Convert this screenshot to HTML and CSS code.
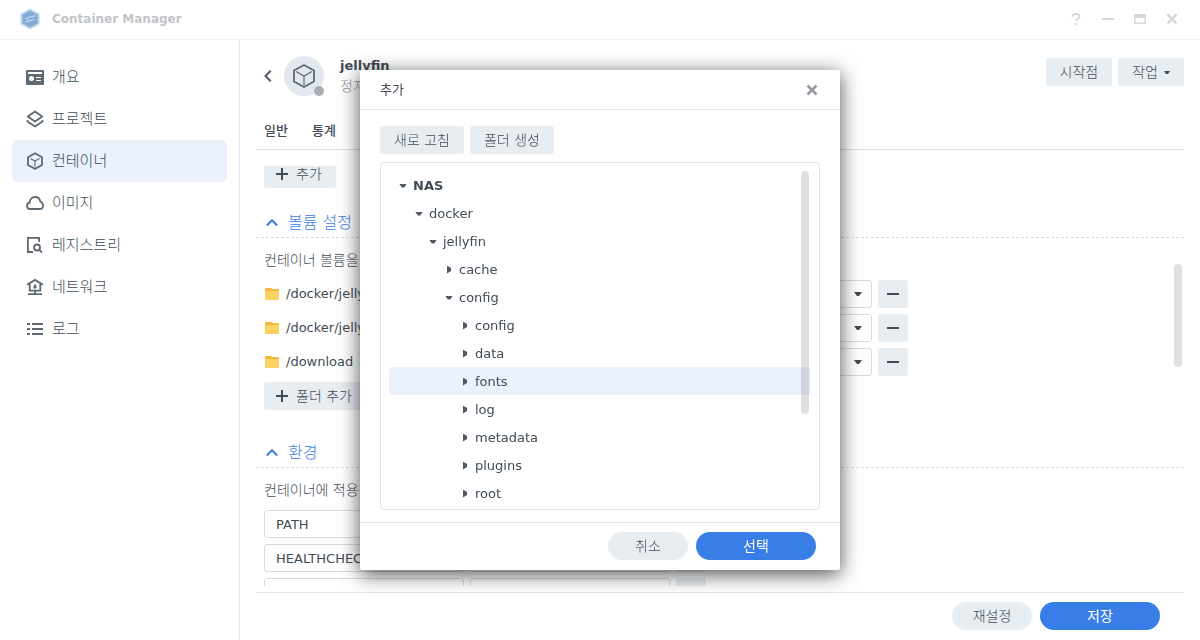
FILE: index.html
```html
<!DOCTYPE html>
<html lang="ko">
<head>
<meta charset="utf-8">
<meta name="viewport" content="width=device-width, initial-scale=1">
<title>Container Manager</title>
<link rel="stylesheet" href="styles.css">
</head>
<body>
<div class="window">
  <header class="titlebar">
    <svg class="app-logo" width="22" height="22" viewBox="0 0 22 22" aria-hidden="true">
      <path d="M11 0.500 20.500 5.700V16.300L11 21.500 1.500 16.300V5.700Z" fill="#b5d8f8"/>
      <path d="M11 2.500 18.700 6.800V15.200L11 19.500 3.300 15.200V6.800Z" fill="#93a7c6"/>
      <path d="M11 4.500 16.800 7.800V14.200L11 17.500 5.200 14.200V7.800Z" fill="#82a8dc"/>
      <path d="M6 10.500c2 1 3-1 5-1.500s3 .5 5-1.500M6.500 13.500c3 .5 4-1.500 9-2" fill="none" stroke="#b9e0ee" stroke-width="1.200"/>
    </svg>
    <h1 class="app-title">Container Manager</h1>
    <div class="window-controls">
      <button class="icon-button" aria-label="도움말"><svg width="12" height="12" viewBox="0 0 12 12"><path d="M2.500 3.800C2.500 2 4 1 6 1s3.500 1 3.500 2.700C9.500 5.800 6.200 5.600 6.200 8.300M5.200 11h2" fill="none" stroke="currentColor" stroke-width="1.800"/></svg></button>
      <button class="icon-button" aria-label="최소화"><svg width="12" height="12" viewBox="0 0 12 12"><path d="M0 6h12" stroke="currentColor" stroke-width="2"/></svg></button>
      <button class="icon-button" aria-label="최대화"><svg width="12" height="12" viewBox="0 0 12 12"><path d="M0 1h12v10H0zM1.500 5v4.500h9V5z" fill="currentColor" fill-rule="evenodd"/></svg></button>
      <button class="icon-button" aria-label="닫기"><svg width="12" height="12" viewBox="0 0 12 12"><path d="M1.500 1.500l9 9M10.500 1.500l-9 9" stroke="currentColor" stroke-width="2.600"/></svg></button>
    </div>
  </header>

  <div class="body">
    <nav class="sidebar" aria-label="메뉴">
      <a class="nav-item" href="#overview"><svg width="18" height="18" viewBox="0 0 18 18"><path fill="currentColor" fill-rule="evenodd" d="M1 2h16a1 1 0 0 1 1 1v13a1 1 0 0 1-1 1H1a1 1 0 0 1-1-1V3a1 1 0 0 1 1-1zM2 4v2h14V4zM5.500 8a2.500 2.500 0 1 0 0 5 2.500 2.500 0 0 0 0-5zM10 9v1h5V9zM10 12v1h5v-1z"/></svg>개요</a>
      <a class="nav-item" href="#project"><svg width="18" height="18" viewBox="0 0 18 18"><g fill="none" stroke="currentColor" stroke-width="1.800" stroke-linejoin="round"><path d="M9 1.500 16.200 6.500 9 11.500 1.800 6.500Z"/><path d="M1.500 10V11.500L9 16.500 16.500 11.500V10"/></g></svg>프로젝트</a>
      <a class="nav-item nav-item-active" href="#container" aria-current="page"><svg width="18" height="18" viewBox="0 0 18 18"><path d="M9 1.200 16 5.200V13L9 16.900 2 13V5.200Z" fill="none" stroke="currentColor" stroke-width="1.800" stroke-linejoin="round"/><path d="M4.500 6.500 9 9 13.500 6.500M9 9v5.500" fill="none" stroke="currentColor" stroke-width="1.100"/></svg>컨테이너</a>
      <a class="nav-item" href="#image"><svg width="18" height="18" viewBox="0 0 18 18"><path d="M4.500 15C2.300 15 1 13.500 1 11.700 1 10 2.200 8.800 3.700 8.500 3.800 5.300 6 3 9 3c2.800 0 4.800 1.800 5.300 4.500C16 8.200 17 9.600 17 11.400 17 13.500 15.500 15 13.400 15Z" fill="none" stroke="currentColor" stroke-width="1.800"/></svg>이미지</a>
      <a class="nav-item" href="#registry"><svg width="18" height="18" viewBox="0 0 18 18"><g fill="none" stroke="currentColor" stroke-width="1.800"><path d="M7 16H1.900V1.900H13.100V6"/><circle cx="11" cy="11.500" r="3"/><path d="M13.200 13.600 16 16.700"/></g></svg>레지스트리</a>
      <a class="nav-item" href="#network"><svg width="18" height="18" viewBox="0 0 18 18"><g fill="none" stroke="currentColor" stroke-width="1.800"><path d="M1 6.800 9 1.900 17 6.800M3.700 6V12.700H14.300V6M9 12.700V16M2 16.200H16"/></g><path d="M7.500 10.500V8L9 6l1.500 2v2.500z" fill="currentColor"/></svg>네트워크</a>
      <a class="nav-item" href="#log"><svg width="18" height="18" viewBox="0 0 18 18"><path d="M1 4h3M6 4h11M1 9h3M6 9h11M1 14h3M6 14h11" stroke="currentColor" stroke-width="2"/></svg>로그</a>
    </nav>

    <main class="main">
      <div class="detail-header">
        <button class="back" aria-label="뒤로"><svg width="8" height="12" viewBox="0 0 8 12"><path d="M6.700 0.800 1.500 6l5.200 5.200" fill="none" stroke="currentColor" stroke-width="2"/></svg></button>
        <div class="avatar">
          <svg width="24" height="26" viewBox="0 0 24 26" aria-hidden="true"><path d="M12 2 22 7.500V18.500L12 24 2 18.500V7.500Z" fill="none" stroke="currentColor" stroke-width="1.800" stroke-linejoin="round"/><path d="M4 8.500 12 13 20 8.500M12 13V22" fill="none" stroke="currentColor" stroke-width="1.200"/></svg>
          <span class="status-dot"></span>
        </div>
        <div class="identity">
          <h2 class="container-name">jellyfin</h2>
          <p class="container-status">정지됨</p>
        </div>
        <div class="detail-actions">
          <button class="button">시작점</button>
          <button class="button">작업<svg width="6" height="3" viewBox="0 0 6 3"><path d="M0 0h6L4 3H2z" fill="currentColor"/></svg></button>
        </div>
      </div>
      <div class="tabs">
        <button class="tab">일반</button>
        <button class="tab">통계</button>
      </div>

      <div class="scroll-area">
        <div class="settings">
          <button class="button add-button"><svg width="12" height="12" viewBox="0 0 12 12"><path d="M0 6h12M6 0v12" stroke="currentColor" stroke-width="2"/></svg>추가</button>

          <section class="section">
            <h3 class="section-title"><svg width="12" height="8" viewBox="0 0 12 8"><path d="M0.800 6.500 6 1.300 11.200 6.500" fill="none" stroke="currentColor" stroke-width="2"/></svg>볼륨 설정</h3>
            <div class="section-body">
              <p class="description">컨테이너 볼륨을</p>
              <div class="row">
                <span class="path"><svg width="14" height="12" viewBox="0 0 14 12"><path d="M0 1q0-1 1-1h5l1.500 1H13q1 0 1 1v4H0z" fill="#f5b83f"/><path d="M0 3h14v8q0 1-1 1H1q-1 0-1-1z" fill="#fad364"/></svg>/docker/jellyfin</span>
                <input class="field" type="text" aria-label="마운트 경로">
                <span class="select-wrap"><select class="field select" aria-label="권한"></select><svg class="select-caret" width="8" height="4" viewBox="0 0 8 4"><path d="M0 0h8L5 4H3z" fill="currentColor"/></svg></span>
                <button class="button remove" aria-label="제거"><svg width="12" height="2" viewBox="0 0 12 2"><path d="M0 1h12" stroke="currentColor" stroke-width="2"/></svg></button>
              </div>
              <div class="row">
                <span class="path"><svg width="14" height="12" viewBox="0 0 14 12"><path d="M0 1q0-1 1-1h5l1.500 1H13q1 0 1 1v4H0z" fill="#f5b83f"/><path d="M0 3h14v8q0 1-1 1H1q-1 0-1-1z" fill="#fad364"/></svg>/docker/jellyfin</span>
                <input class="field" type="text" aria-label="마운트 경로">
                <span class="select-wrap"><select class="field select" aria-label="권한"></select><svg class="select-caret" width="8" height="4" viewBox="0 0 8 4"><path d="M0 0h8L5 4H3z" fill="currentColor"/></svg></span>
                <button class="button remove" aria-label="제거"><svg width="12" height="2" viewBox="0 0 12 2"><path d="M0 1h12" stroke="currentColor" stroke-width="2"/></svg></button>
              </div>
              <div class="row">
                <span class="path"><svg width="14" height="12" viewBox="0 0 14 12"><path d="M0 1q0-1 1-1h5l1.500 1H13q1 0 1 1v4H0z" fill="#f5b83f"/><path d="M0 3h14v8q0 1-1 1H1q-1 0-1-1z" fill="#fad364"/></svg>/download</span>
                <input class="field" type="text" aria-label="마운트 경로">
                <span class="select-wrap"><select class="field select" aria-label="권한"></select><svg class="select-caret" width="8" height="4" viewBox="0 0 8 4"><path d="M0 0h8L5 4H3z" fill="currentColor"/></svg></span>
                <button class="button remove" aria-label="제거"><svg width="12" height="2" viewBox="0 0 12 2"><path d="M0 1h12" stroke="currentColor" stroke-width="2"/></svg></button>
              </div>
              <button class="button add-button"><svg width="12" height="12" viewBox="0 0 12 12"><path d="M0 6h12M6 0v12" stroke="currentColor" stroke-width="2"/></svg>폴더 추가</button>
            </div>
          </section>

          <section class="section">
            <h3 class="section-title"><svg width="12" height="8" viewBox="0 0 12 8"><path d="M0.800 6.500 6 1.300 11.200 6.500" fill="none" stroke="currentColor" stroke-width="2"/></svg>환경</h3>
            <div class="section-body">
              <p class="description">컨테이너에 적용</p>
              <div class="row">
                <input class="field" type="text" value="PATH" aria-label="변수">
                <input class="field" type="text" aria-label="값">
                <button class="button remove" aria-label="제거"></button>
              </div>
              <div class="row">
                <input class="field" type="text" value="HEALTHCHECK" aria-label="변수">
                <input class="field" type="text" aria-label="값">
                <button class="button remove" aria-label="제거"></button>
              </div>
              <div class="row">
                <input class="field" type="text" aria-label="변수">
                <input class="field" type="text" aria-label="값">
                <button class="button remove" aria-label="제거"></button>
              </div>
            </div>
          </section>
        </div>
        <span class="scrollbar page-scrollbar"></span>
      </div>

      <footer class="page-footer">
        <button class="button pill">재설정</button>
        <button class="button pill pill-primary">저장</button>
      </footer>
    </main>
  </div>
</div>

<div class="overlay">
  <div class="dialog" role="dialog" aria-modal="true" aria-labelledby="dialog-title">
    <header class="dialog-header">
      <h2 class="dialog-title" id="dialog-title">추가</h2>
      <button class="icon-button dialog-close" aria-label="닫기"><svg width="12" height="12" viewBox="0 0 12 12"><path d="M1.500 1.500l9 9M10.500 1.500l-9 9" stroke="currentColor" stroke-width="2.600"/></svg></button>
    </header>
    <div class="dialog-body">
      <div class="toolbar">
        <button class="button">새로 고침</button>
        <button class="button">폴더 생성</button>
      </div>
      <div class="tree-box">
        <ul class="tree" role="tree">
          <li class="node node-root level-1" role="treeitem" aria-expanded="true"><span class="caret caret-open"></span>NAS</li>
          <li class="node level-2" role="treeitem" aria-expanded="true"><span class="caret caret-open"></span>docker</li>
          <li class="node level-3" role="treeitem" aria-expanded="true"><span class="caret caret-open"></span>jellyfin</li>
          <li class="node level-4" role="treeitem"><span class="caret"></span>cache</li>
          <li class="node level-4" role="treeitem" aria-expanded="true"><span class="caret caret-open"></span>config</li>
          <li class="node level-5" role="treeitem"><span class="caret"></span>config</li>
          <li class="node level-5" role="treeitem"><span class="caret"></span>data</li>
          <li class="node node-selected level-5" role="treeitem" aria-selected="true"><span class="caret"></span>fonts</li>
          <li class="node level-5" role="treeitem"><span class="caret"></span>log</li>
          <li class="node level-5" role="treeitem"><span class="caret"></span>metadata</li>
          <li class="node level-5" role="treeitem"><span class="caret"></span>plugins</li>
          <li class="node level-5" role="treeitem"><span class="caret"></span>root</li>
        </ul>
        <span class="scrollbar tree-scrollbar"></span>
      </div>
    </div>
    <footer class="dialog-footer">
      <button class="button pill">취소</button>
      <button class="button pill pill-primary">선택</button>
    </footer>
  </div>
</div>
</body>
</html>
```

FILE: styles.css
```css
*,
*::before,
*::after {
  box-sizing: border-box;
}

body {
  margin: 0;
  color: #414b55;
  background: #fff;
  font-family: "DejaVu Sans", "Noto Sans CJK KR", sans-serif;
  font-size: 13px;
  line-height: 20px;
}

h1, h2, h3, p, ul {
  margin: 0;
  padding: 0;
  font-size: inherit;
  font-weight: normal;
}

button, input, select {
  margin: 0;
  color: inherit;
  font: inherit;
}

svg {
  flex: none;
  display: block;
}

.window {
  display: flex;
  flex-direction: column;
  height: 100vh;
}

/* Title bar */
.titlebar {
  display: flex;
  align-items: center;
  height: 40px;
  padding: 0 20px 1px 19px;
  border-bottom: 1px solid #f3f4f6;
}

.app-title {
  flex: 1;
  margin-left: 11px;
  color: #c2c4c8;
  font-size: 12px;
  font-weight: bold;
}

.window-controls {
  display: flex;
  gap: 16px;
  color: #d7d8dc;
}

.icon-button {
  display: flex;
  align-items: center;
  justify-content: center;
  width: 16px;
  height: 16px;
  padding: 0;
  border: 0;
  background: none;
}

/* Sidebar */
.body {
  display: flex;
  flex: 1;
  min-height: 0;
}

.sidebar {
  flex: none;
  width: 240px;
  padding: 16px 12px;
  border-right: 1px solid #e4e8ef;
}

.nav-item {
  display: flex;
  align-items: center;
  gap: 8px;
  height: 42px;
  padding: 0 14px;
  border-radius: 5px;
  color: #414b55;
  font-size: 15px;
  font-weight: 300;
  text-decoration: none;
}

.nav-item svg {
  color: #5f6973;
}

.nav-item-active {
  background: #ebf1fd;
}

/* Container details */
.main {
  display: flex;
  flex: 1;
  flex-direction: column;
  min-width: 0;
  padding: 0 16px;
}

.detail-header {
  display: flex;
  align-items: center;
  height: 72px;
  padding-left: 8px;
}

.back {
  padding: 0;
  border: 0;
  background: none;
  color: #505a64;
}

.avatar {
  position: relative;
  display: grid;
  place-items: center;
  width: 40px;
  height: 40px;
  margin-left: 12px;
  border-radius: 50%;
  background: #e3e8f0;
  color: #5f6973;
}

.status-dot {
  position: absolute;
  right: 0;
  bottom: 0;
  width: 10px;
  height: 10px;
  border-radius: 50%;
  background: #a9acb2;
}

.identity {
  flex: 1;
  margin-left: 16px;
}

.container-name {
  font-weight: bold;
}

.container-status {
  color: #8d949c;
  font-size: 14px;
  font-weight: 300;
}

.detail-actions {
  display: flex;
  align-self: flex-start;
  gap: 6px;
  padding-top: 18px;
}

.button {
  display: inline-flex;
  align-items: center;
  justify-content: center;
  gap: 6px;
  height: 28px;
  padding: 0 14px;
  border: 0;
  border-radius: 3px;
  background: #e8edf2;
  font-size: 14px;
  font-weight: 300;
  white-space: nowrap;
}

.tabs {
  display: flex;
  gap: 24px;
  height: 38px;
  padding-left: 8px;
  border-bottom: 1px solid #d7dfea;
}

.tab {
  padding: 0;
  border: 0;
  background: none;
  font-size: 13px;
  font-weight: 500;
}

.scroll-area {
  position: relative;
  flex: 1;
  min-height: 0;
  margin: 16px 0 6px;
  overflow: hidden;
}

/* The list is scrolled down slightly, so its first button is cut off. */
.settings {
  margin-top: -6px;
}

.settings > .add-button {
  margin-left: 8px;
}

.add-button {
  gap: 8px;
  padding-left: 12px;
}

.section {
  padding-top: 20px;
}

.section + .section {
  padding-top: 28px;
}

.section-title {
  display: flex;
  align-items: center;
  gap: 10px;
  height: 30px;
  padding-left: 10px;
  border-bottom: 1px dashed #d7dae0;
  color: #3a7de6;
  font-size: 16px;
  font-weight: 300;
}

.section-body {
  display: flex;
  flex-direction: column;
  align-items: flex-start;
  gap: 6px;
  padding: 8px 8px 0;
}

.description {
  height: 28px;
  font-size: 14px;
  font-weight: 300;
  line-height: 28px;
}

.row {
  display: flex;
  gap: 6px;
}

.path {
  display: flex;
  align-items: center;
  gap: 7px;
  width: 200px;
  padding-left: 1px;
}

.field {
  width: 200px;
  height: 28px;
  padding: 0 11px;
  border: 1px solid #d2dce6;
  border-radius: 3px;
  background: #fff;
}

.select-wrap {
  position: relative;
}

.select {
  width: 196px;
  appearance: none;
}

.select-caret {
  position: absolute;
  top: 12px;
  right: 10px;
  pointer-events: none;
}

.remove {
  width: 30px;
  padding: 0;
}

.scrollbar {
  position: absolute;
  width: 8px;
  border-radius: 4px;
  background: rgba(0, 0, 0, 0.12);
}

.page-scrollbar {
  top: 98px;
  right: 2px;
  height: 103px;
}

.page-footer {
  display: flex;
  justify-content: flex-end;
  gap: 8px;
  padding: 9px 24px 10px;
  border-top: 1px solid #dfe5ec;
}

.pill {
  width: 80px;
  border-radius: 14px;
}

.pill-primary {
  width: 120px;
  background: #397ee6;
  color: #fff;
  font-weight: 400;
}

/* Folder picker */
.overlay {
  position: fixed;
  inset: 0;
  display: flex;
  align-items: center;
  justify-content: center;
}

.dialog {
  width: 480px;
  max-width: 100%;
  border-radius: 2px;
  background: #fff;
  box-shadow: 0 4px 20px rgba(0, 0, 0, 0.7);
}

.dialog-header {
  display: flex;
  align-items: center;
  justify-content: space-between;
  height: 40px;
  padding: 0 20px;
  border-bottom: 1px solid #e4e7ec;
}

.dialog-title {
  font-size: 13px;
}

.dialog-close {
  color: #96999f;
}

.dialog-body {
  padding: 16px 20px 12px;
}

.toolbar {
  display: flex;
  gap: 6px;
  margin-bottom: 8px;
}

.tree-box {
  position: relative;
  padding: 8px 8px 2px;
  border: 1px solid #e2e6ed;
  border-radius: 4px;
}

.tree {
  list-style: none;
}

.node {
  display: flex;
  align-items: center;
  gap: 6px;
  height: 28px;
  padding-top: 1px;
  border-radius: 4px;
}

.node-root {
  font-weight: bold;
}

.node-selected {
  background: #ebf1fd;
}

.level-1 { padding-left: 10px; }
.level-2 { padding-left: 26px; }
.level-3 { padding-left: 40px; }
.level-4 { padding-left: 56px; }
.level-5 { padding-left: 72px; }

.caret {
  display: flex;
  justify-content: center;
  width: 8px;
}

.caret::before {
  width: 4px;
  height: 8px;
  background: #505a64;
  clip-path: polygon(0 0, 100% 30%, 100% 70%, 0 100%);
  content: "";
}

.caret-open::before {
  width: 8px;
  height: 4px;
  clip-path: polygon(0 0, 100% 0, 65% 100%, 35% 100%);
}

.tree-scrollbar {
  top: 8px;
  right: 10px;
  height: 243px;
}

.dialog-footer {
  display: flex;
  justify-content: flex-end;
  gap: 8px;
  padding: 9px 24px 10px;
  border-top: 1px solid #dfe5ec;
}
```
